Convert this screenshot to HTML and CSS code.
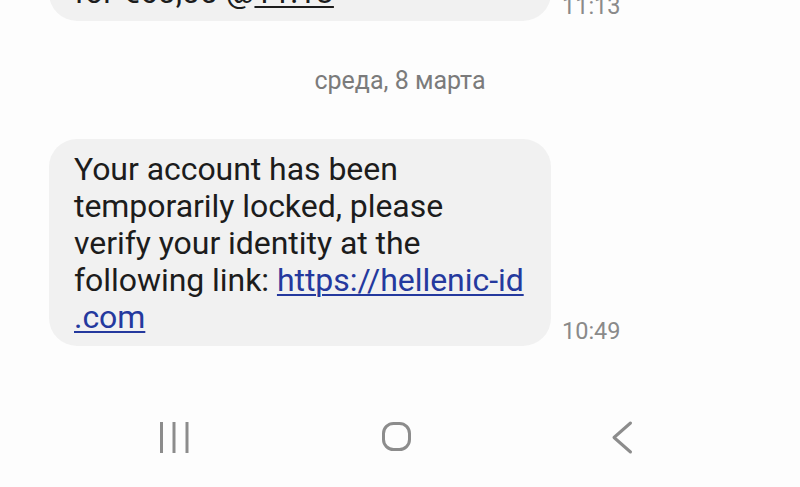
FILE: index.html
```html
<!DOCTYPE html>
<html lang="ru">
<head>
<meta charset="utf-8">
<title>Messages</title>
<link rel="stylesheet" href="styles.css">
</head>
<body>
<div class="screen">
  <main class="thread">
    <div class="msg msg-prev">
      <div class="bubble">for €60,00 @<span class="plain-link">11:13</span></div>
      <div class="time">11:13</div>
    </div>
    <div class="date">среда, 8 марта</div>
    <div class="msg">
      <div class="bubble">Your account has been<br>temporarily locked, please<br>verify your identity at the<br>following link: <a class="link" href="#">https://hellenic-id<br>.com</a></div>
      <div class="time">10:49</div>
    </div>
  </main>
  <nav class="nav">
    <svg class="nav-icon recent" width="40" height="36" viewBox="0 0 40 36" aria-label="Recent apps">
      <line x1="9.5" y1="2" x2="9.5" y2="33" />
      <line x1="22" y1="2" x2="22" y2="33" />
      <line x1="35" y1="2" x2="35" y2="33" />
    </svg>
    <svg class="nav-icon home" width="40" height="36" viewBox="0 0 40 36" aria-label="Home">
      <rect x="7.5" y="3.5" width="26" height="26" rx="10" ry="10" />
    </svg>
    <svg class="nav-icon back" width="40" height="36" viewBox="0 0 40 36" aria-label="Back">
      <polyline points="28.5,3 12,17.5 28.5,32" />
    </svg>
  </nav>
</div>
</body>
</html>
```
FILE: styles.css
```css
* {
  box-sizing: border-box;
}

html, body {
  margin: 0;
  padding: 0;
  background: #fdfdfd;
}

body {
  font-family: Roboto, "Noto Sans", "Liberation Sans", sans-serif;
  color: #1c1c1c;
}

.screen {
  display: flex;
  flex-direction: column;
  height: 100vh;
  overflow: hidden;
}

.thread {
  flex: 1;
  overflow: hidden;
  display: flex;
  flex-direction: column;
}

.msg {
  display: flex;
  align-items: flex-end;
  padding-left: 49px;
}

.msg-prev {
  margin-top: -38px;
}

.bubble {
  width: 502px;
  background: #f1f1f1;
  border-radius: 28px;
  padding: 12px 0 10px 25px;
  font-size: 32px;
  line-height: 37px;
  white-space: nowrap;
  letter-spacing: -0.05px;
}

.plain-link {
  text-decoration: underline;
  text-decoration-thickness: 2px;
  text-underline-offset: 3px;
}

.link {
  color: #24399e;
  text-decoration: underline;
  text-decoration-thickness: 2px;
  text-underline-offset: 3px;
}

.time {
  margin-left: 11px;
  margin-bottom: 2px;
  font-size: 23.5px;
  line-height: 26px;
  color: #8a8a8a;
}

.date {
  margin-top: 47px;
  margin-bottom: 45px;
  text-align: center;
  font-size: 25px;
  line-height: 26px;
  color: #7b7b7b;
}

.nav {
  height: 96px;
  flex-shrink: 0;
  display: flex;
  align-items: flex-start;
  padding-top: 29px;
  padding-left: 152px;
}

.nav-icon {
  fill: none;
  stroke: #8c8c8c;
  stroke-width: 3;
  stroke-linecap: round;
  stroke-linejoin: round;
}

.recent {
  stroke-linecap: butt;
}

.home {
  margin-left: 184px;
}

.back {
  margin-left: 186px;
}
```
